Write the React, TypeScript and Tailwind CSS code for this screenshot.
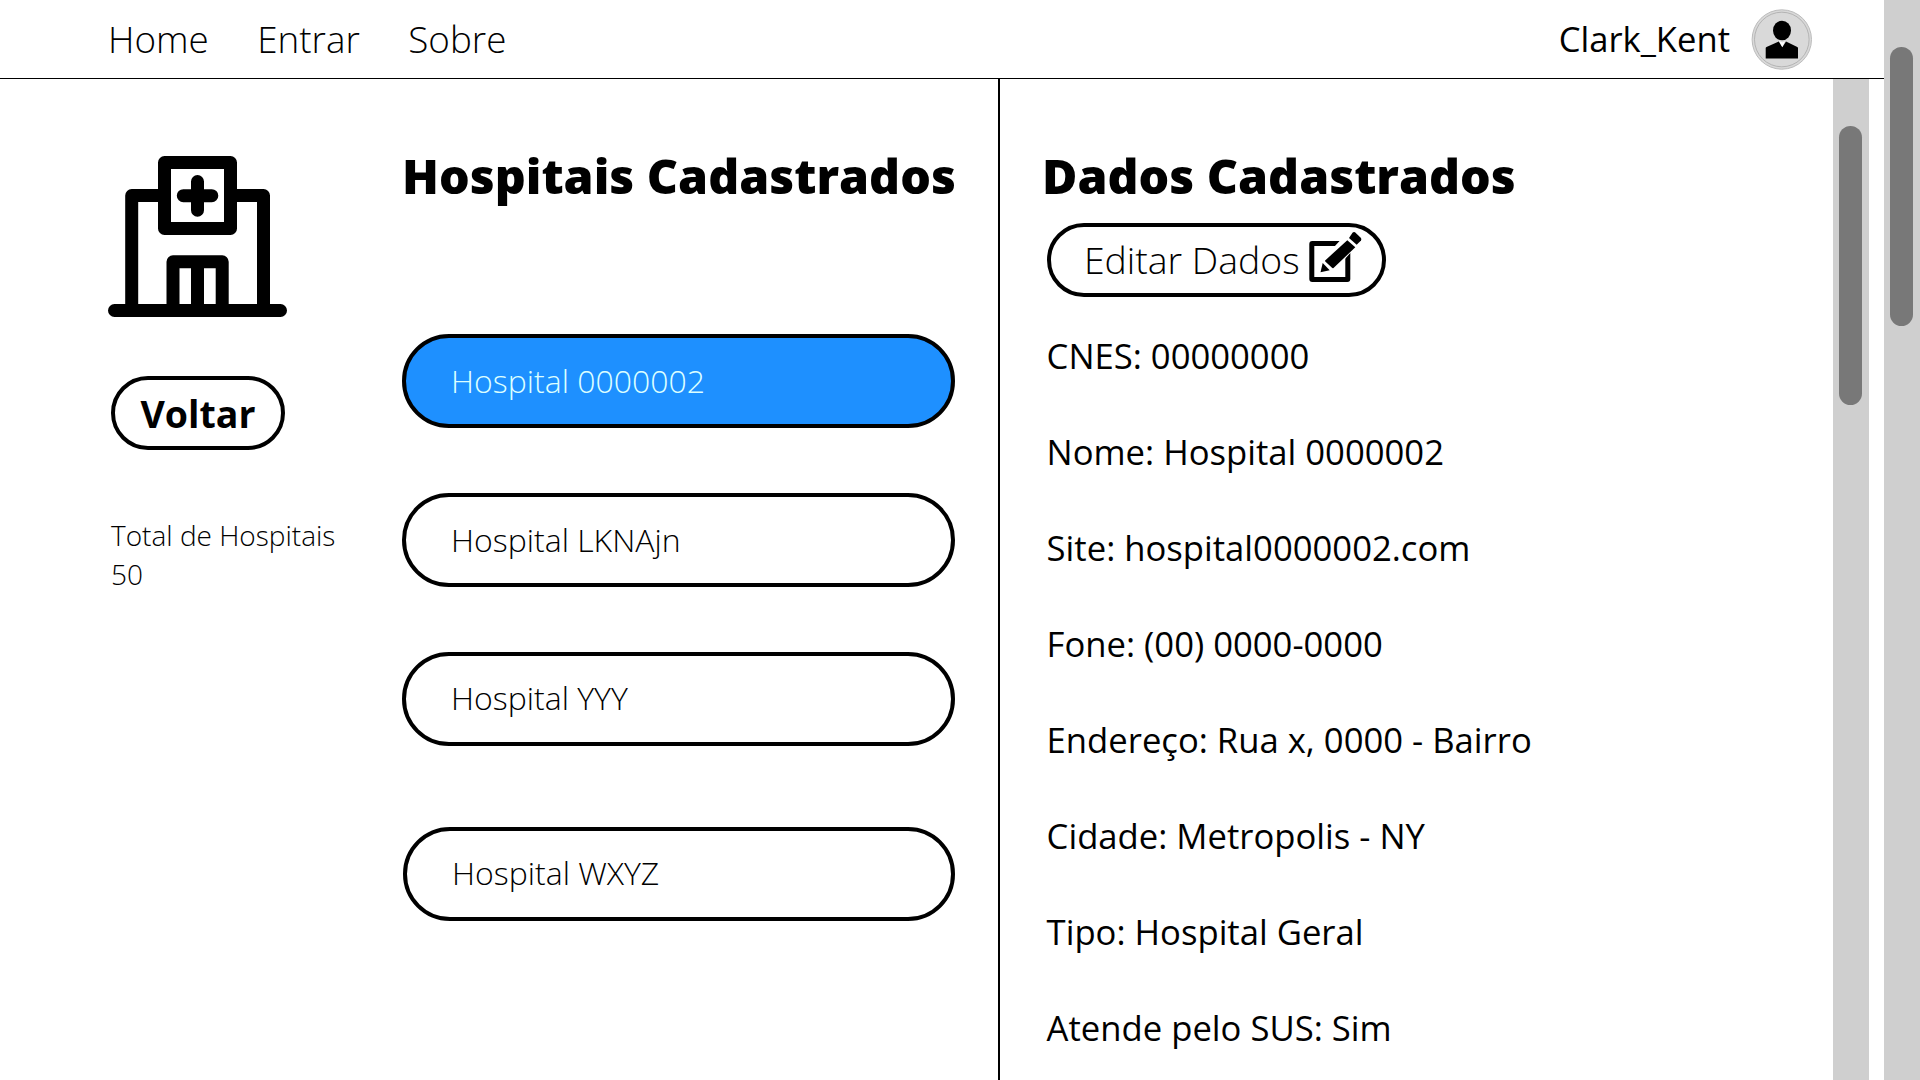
const hospitals = [
  { name: "Hospital 0000002", cls: "bg-[#1e90ff] text-[#dcffff]" },
  { name: "Hospital LKNAjn", cls: "bg-white mt-[65px]" },
  { name: "Hospital YYY", cls: "bg-white mt-[65px] pb-[2px]" },
  { name: "Hospital WXYZ", cls: "bg-white mt-[81px] ml-px pb-[2px]" },
];

const details = [
  "CNES: 00000000",
  "Nome: Hospital 0000002",
  "Site: hospital0000002.com",
  "Fone: (00) 0000-0000",
  "Endereço: Rua x, 0000 - Bairro",
  "Cidade: Metropolis - NY",
  "Tipo: Hospital Geral",
  "Atende pelo SUS: Sim",
];

function HospitalIcon() {
  return (
    <svg className="block h-[161px] w-[179px]" viewBox="0 0 179 161" fill="none" stroke="#000" strokeWidth="13" strokeLinecap="round" strokeLinejoin="round">
      <path d="M6.5 154.5H172.5M23.700 154V39.5H56M123 39.5H155.500V154" />
      <rect x="56.500" y="6.500" width="66" height="66" />
      <path d="M89.500 25.500V54.200M75.300 39.700H103.800" />
      <path d="M65 154V105.800H114.200V154M89.500 106V154" />
    </svg>
  );
}

function EditIcon() {
  return (
    <svg className="block h-[52px] w-[55px]" viewBox="0 0 55 52">
      <rect x="3.800" y="12.500" width="36" height="36" rx="0.500" fill="none" stroke="#000" strokeWidth="5" strokeLinejoin="round" />
      <path d="M32.500 9L36 4L54 14L42.300 22L27.500 38.500L22 41.500L10.500 43L14.500 28.500Z" fill="#fff" />
      <path d="M39.300 9.300L47.300 16.300L25.500 37Q24.700 37.500 24 36.800L17.300 30.500Q16.700 29.800 17.400 29.200Z" />
      <path d="M41 7L44.500 1.700Q45.700 0.500 47 1.300L53 7Q53.700 8 53 9.500L48.700 13.700Z" />
      <path d="M14.700 32L21.700 39.300L12.500 41.200Z" />
    </svg>
  );
}

function Avatar() {
  return (
    <svg className="block h-[61px] w-[61px]" viewBox="0 0 61 61">
      <circle cx="30.800" cy="30.500" r="29.700" fill="#d9d9d9" stroke="#bcbcbc" strokeWidth="1" />
      <circle cx="30.800" cy="30.500" r="27.300" fill="#d9d9d9" stroke="#a9a9a9" strokeWidth="0.800" />
      <ellipse cx="31" cy="21.500" rx="9" ry="9.800" />
      <path d="M14.700 49.500V39Q14.700 38.500 15.500 38L27.800 32.500L31.300 38.300L35 32.500L46.300 38Q47 38.300 47 39V49.500Z" />
      <path d="M28 32L31.200 33.500L34 32.200L31.300 38Z" fill="#fff" />
    </svg>
  );
}

export default function App() {
  return (
    <div className="flex h-[1080px] w-[1920px] overflow-hidden bg-white font-['Open_Sans',sans-serif] text-black">
      <div className="flex w-[1884px] flex-col">
        <header className="flex h-[79px] shrink-0 items-center justify-between border-b border-black pr-[72px] pl-[108px]">
          <nav className="flex gap-[48.500px] pt-[2px] text-[36.800px] font-light">
            <a>Home</a>
            <a>Entrar</a>
            <a>Sobre</a>
          </nav>
          <div className="flex items-center gap-[21px] text-[34.600px]">
            <span>Clark_Kent</span>
            <Avatar />
          </div>
        </header>

        <div className="flex min-h-0 flex-1">
          <aside className="flex w-[402px] flex-col items-start pt-[77px] pl-[108px]">
            <HospitalIcon />
            <button className="mt-[59px] ml-[3px] h-[74px] w-[174px] rounded-full border-4 border-black text-[37.500px] leading-[68px] font-bold">
              Voltar
            </button>
            <p className="mt-[66px] ml-[3px] text-[28px] leading-[39px] font-light">
              Total de Hospitais
              <br />
              50
            </p>
          </aside>

          <section className="w-[596px]">
            <h1 className="mt-[61px] text-[48.250px] leading-[70px] font-extrabold whitespace-nowrap">Hospitais Cadastrados</h1>
            <div className="mt-[124px] flex w-[553px] flex-col">
              {hospitals.map((h) => (
                <button
                  key={h.name}
                  className={`h-[94px] rounded-full border-4 border-black pl-[45px] text-left text-[32px] leading-[48px] font-light ${h.cls}`}
                >
                  {h.name}
                </button>
              ))}
            </div>
          </section>

          <section className="flex-1 border-l-2 border-black pl-[42px]">
            <h1 className="mt-[61px] text-[48.250px] leading-[70px] font-extrabold whitespace-nowrap">Dados Cadastrados</h1>
            <button className="mt-[13px] ml-[4.500px] flex h-[74px] w-[339.500px] items-start rounded-full border-4 border-black pl-[25.500px] text-[37.400px] leading-[66px] font-light">
              <span className="w-[231.500px] shrink-0 whitespace-nowrap">Editar Dados</span>
              <span className="mt-[4px] shrink-0">
                <EditIcon />
              </span>
            </button>
            <ul className="mt-[11px] ml-[4.600px] text-[34.650px] leading-[96px]">
              {details.map((d) => (
                <li key={d} className="whitespace-nowrap">{d}</li>
              ))}
            </ul>
          </section>

          <div className="mr-[15px] flex w-9 justify-center bg-[#cfcfcf] pt-[47px] pr-px">
            <div className="h-[279px] w-[23px] rounded-full bg-[#787878]" />
          </div>
        </div>
      </div>
      <div className="flex w-9 justify-center bg-[#cfcfcf] pt-[47px] pr-px">
        <div className="h-[279px] w-[23px] rounded-full bg-[#787878]" />
      </div>
    </div>
  );
}
